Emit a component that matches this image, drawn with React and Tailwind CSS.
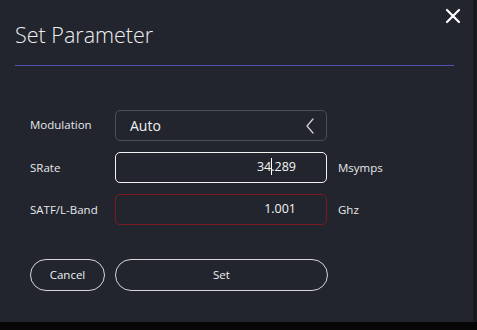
import { X } from 'lucide-react'

const font = { fontFamily: '"Open Sans", "Noto Sans", sans-serif' }

function Field({ children, className }) {
  return (
    <div className={`h-[31px] rounded-[5px] border flex items-center ${className}`}>
      {children}
    </div>
  )
}

export default function App() {
  return (
    <div className="w-[477px] h-[330px] bg-[#060606] flex flex-col text-[#e8e8ea]" style={font}>
      <div className="h-[322px] flex">
        <div className="w-[473px] h-full bg-[#22252e] relative">
          {/* Close */}
          <button className="absolute right-[8px] top-[4px] text-white">
            <X size={24} strokeWidth={2.2} />
          </button>

          {/* Header */}
          <div className="px-[15px] pt-[21px]">
            <h1 className="text-[21.5px] font-light leading-[28px] text-[#eeeeee]">Set Parameter</h1>
            <div className="mt-[16px] mr-[4px] h-px bg-[#4f53b0]" />
          </div>

          {/* Form */}
          <div className="pl-[30px] mt-[44px] grid grid-cols-[85px_212px_auto] gap-y-[11px] items-center text-[11.5px]">
            <span className="pb-[2px]">Modulation</span>
            <Field className="border-[#4b4e57] justify-between pl-[14px] pr-[12px]">
              <span className="text-[14px] text-[#f0f0f0]">Auto</span>
              <svg width="8" height="16" viewBox="0 0 8 16" fill="none" className="text-[#d0d0d0]">
                <path d="M7 1 L1 8 L7 15" stroke="currentColor" strokeWidth="1.3" strokeLinejoin="round" strokeLinecap="round" />
              </svg>
            </Field>
            <span />

            <span>SRate</span>
            <Field className="border-[#f2f2f2] justify-end pr-[30px]">
              <span className="text-[12.5px] text-[#f4f4f4]">
                34<span className="inline-block w-px h-[17px] bg-white align-middle -mx-[0.5px] -mt-[3px]" />.289
              </span>
            </Field>
            <span className="pl-[11px]">Msymps</span>

            <span>SATF/L-Band</span>
            <Field className="border-[#7b1a22] justify-end pr-[30px]">
              <span className="text-[12.5px] text-[#f4f4f4]">1.001</span>
            </Field>
            <span className="pl-[11px]">Ghz</span>
          </div>

          {/* Buttons */}
          <div className="pl-[30px] mt-[34px] flex gap-[10px] text-[11.5px]">
            <button className="w-[75px] h-[32px] rounded-full border border-[#d6d6d6] text-[#f0f0f0]">Cancel</button>
            <button className="w-[213px] h-[32px] rounded-full border border-[#d6d6d6] text-[#f0f0f0]">Set</button>
          </div>
        </div>
        <div className="flex-1 bg-[#17191d]" />
      </div>
    </div>
  )
}
